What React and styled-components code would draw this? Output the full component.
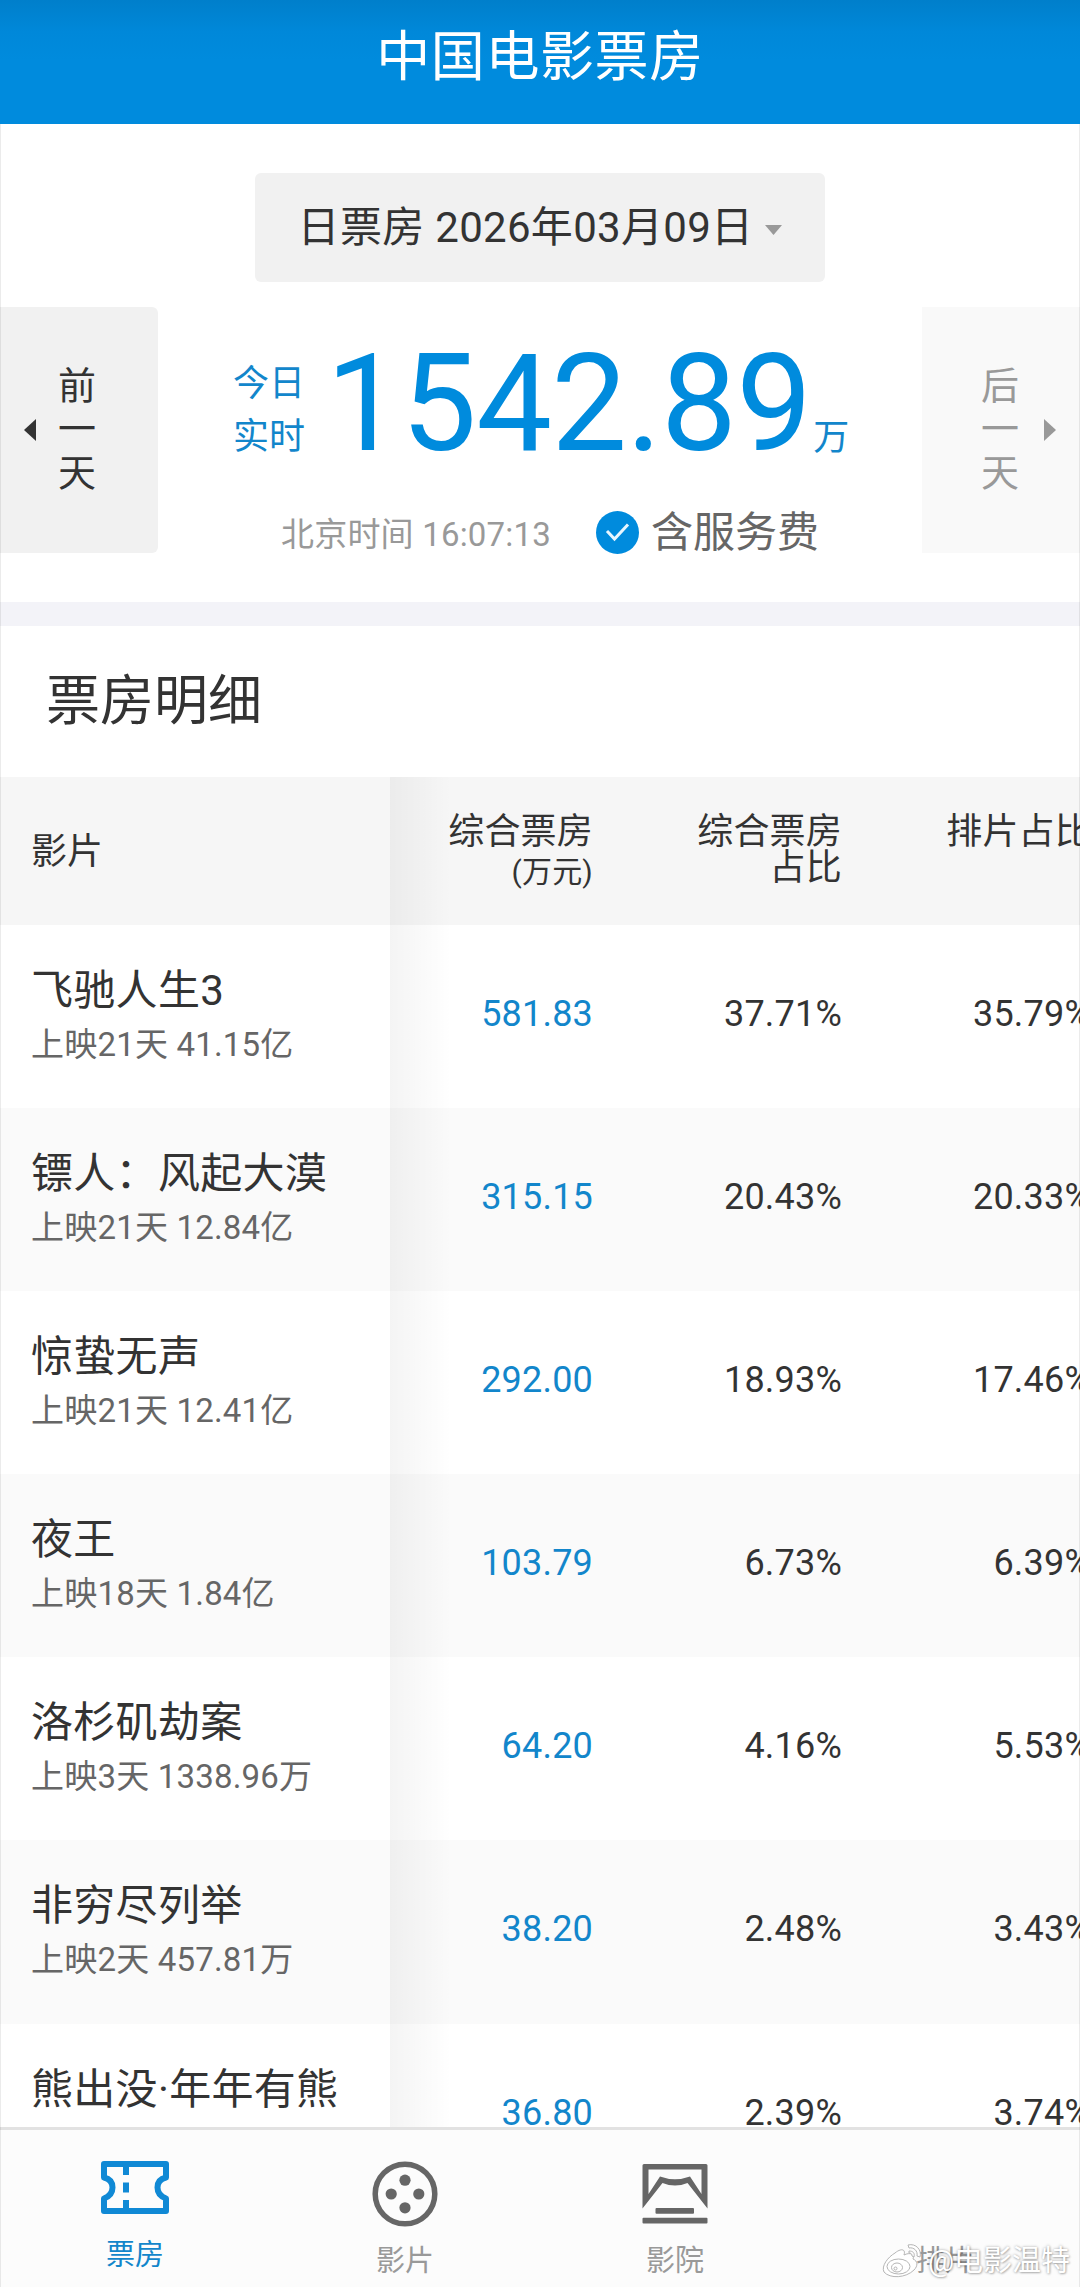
import styled, { createGlobalStyle } from "styled-components";
import { useState } from "react";

const BLUE = "#008bdd";
const TEXT_BLUE = "#1286cb";

const columns = [
  { title: "综合票房", unit: "(万元)" },
  { title: "综合票房", second: "占比" },
  { title: "排片占比" },
];

const movies = [
  { name: "飞驰人生3", info: "上映21天 41.15亿", box: "581.83", boxRate: "37.71%", showRate: "35.79%" },
  { name: "镖人：风起大漠", info: "上映21天 12.84亿", box: "315.15", boxRate: "20.43%", showRate: "20.33%" },
  { name: "惊蛰无声", info: "上映21天 12.41亿", box: "292.00", boxRate: "18.93%", showRate: "17.46%" },
  { name: "夜王", info: "上映18天 1.84亿", box: "103.79", boxRate: "6.73%", showRate: "6.39%" },
  { name: "洛杉矶劫案", info: "上映3天 1338.96万", box: "64.20", boxRate: "4.16%", showRate: "5.53%" },
  { name: "非穷尽列举", info: "上映2天 457.81万", box: "38.20", boxRate: "2.48%", showRate: "3.43%" },
  { name: "熊出没·年年有熊", info: "上映21天 9.86亿", box: "36.80", boxRate: "2.39%", showRate: "3.74%" },
];

export default function App() {
  return (
    <>
      <GlobalStyle />
      <Page>
        <Header>中国电影票房</Header>
        <Overview />
        <DetailTitle>票房明细</DetailTitle>
        <BoxOfficeTable />
        <BottomNav />
        <Watermark>
          <WeiboIcon />
          <span>@电影温特</span>
        </Watermark>
      </Page>
    </>
  );
}

// 日期 + 今日实时票房
const Overview = () => {
  const [withFee, setWithFee] = useState(true);

  return (
    <OverviewSection>
      <DateButton>
        日票房 2026年03月09日
        <Caret width="17" height="10" viewBox="0 0 17 10">
          <path d="M0 0h17L8.5 10z" fill="#999" />
        </Caret>
      </DateButton>
      <DayRow>
        <DayButton>
          <svg width="12" height="22" viewBox="0 0 12 22">
            <path d="M12 0v22L0 11z" fill="#333" />
          </svg>
          <DayText>前一天</DayText>
        </DayButton>
        <Summary>
          <Amount>
            <AmountLabel>今日实时</AmountLabel>
            <AmountNumber>1542.89</AmountNumber>
            <AmountUnit>万</AmountUnit>
          </Amount>
          <SummaryFoot>
            <ClockText>北京时间 16:07:13</ClockText>
            <FeeToggle onClick={() => setWithFee(!withFee)}>
              <svg width="43" height="43" viewBox="0 0 43 43">
                <circle cx="21.5" cy="21.5" r="21.5" fill={withFee ? BLUE : "#ccc"} />
                <path d="M11 20l7.500 8L32 13.500" fill="none" stroke="#e8f6ff" strokeWidth="3" />
              </svg>
              含服务费
            </FeeToggle>
          </SummaryFoot>
        </Summary>
        <DayButton $next>
          <DayText>后一天</DayText>
          <svg width="12" height="22" viewBox="0 0 12 22">
            <path d="M0 0v22l12-11z" fill="#999" />
          </svg>
        </DayButton>
      </DayRow>
    </OverviewSection>
  );
};

// 票房明细表
const BoxOfficeTable = () => (
  <TableWrapper>
    <HeadRow>
      <HeadName>影片</HeadName>
      {columns.map((col, i) => (
        <HeadCell key={i} $shadow={i === 0}>
          <p>{col.title}</p>
          {col.second && <p>{col.second}</p>}
          {col.unit && <HeadUnit>{col.unit}</HeadUnit>}
        </HeadCell>
      ))}
    </HeadRow>
    {movies.map((movie) => (
      <MovieRow key={movie.name}>
        <NameCell>
          <MovieName>{movie.name}</MovieName>
          <MovieInfo>{movie.info}</MovieInfo>
        </NameCell>
        <NumberCell $shadow $blue>
          {movie.box}
        </NumberCell>
        <NumberCell>{movie.boxRate}</NumberCell>
        <NumberCell>{movie.showRate}</NumberCell>
      </MovieRow>
    ))}
  </TableWrapper>
);

const BottomNav = () => (
  <Nav>
    <NavItem $active>
      <TicketIcon />
      <NavLabel $active>票房</NavLabel>
    </NavItem>
    <NavItem>
      <ReelIcon />
      <NavLabel>影片</NavLabel>
    </NavItem>
    <NavItem>
      <CinemaIcon />
      <NavLabel>影院</NavLabel>
    </NavItem>
    <NavItem>
      <EmptyIcon />
      <NavLabel>排片</NavLabel>
    </NavItem>
  </Nav>
);

const TicketIcon = () => (
  <svg width="68" height="53" viewBox="0 0 68 53" fill="none" stroke="#1089d5" strokeWidth="6">
    <path
      d="M3 3h62v13.500C58.500 18 56.500 22 56.500 26.500S58.500 35 65 37.500V50H3V37.500C9.500 35 11.500 31 11.500 26.500S9.500 18 3 16.500z"
      strokeLinejoin="round"
    />
    <path d="M25 3v11M25 21.500v10M25 39v11" />
  </svg>
);

const ReelIcon = () => (
  <svg width="66" height="66" viewBox="0 0 66 66">
    <circle cx="33" cy="33" r="29.800" fill="none" stroke="#666" strokeWidth="5.500" />
    <g fill="#666">
      <circle cx="33" cy="19.200" r="5.600" />
      <circle cx="19.200" cy="33" r="5.600" />
      <circle cx="46.800" cy="33" r="5.600" />
      <circle cx="33" cy="46.800" r="5.600" />
    </g>
  </svg>
);

const CinemaIcon = () => (
  <svg width="66" height="66" viewBox="0 0 66 66" fill="#666">
    <path
      fillRule="evenodd"
      d="M2 3h62q1.500 0 1.500 1.500v43L45.500 22q-12.500 5-25 0L.500 47.500v-43Q.500 3 2 3zM6.500 8.500V33L18 15.500q15 5.500 30 0L59.500 33V8.500z"
    />
    <rect x="13.500" y="47" width="38.500" height="5.700" rx="1" />
    <rect x="0.500" y="56.800" width="65" height="5.800" rx="1" />
  </svg>
);

const WeiboIcon = () => (
  <svg width="41" height="36" viewBox="0 0 41 36" fill="#fff" stroke="#b5b5b5" strokeWidth="1">
    <path d="M13 10C19 5 24 6 22 12c6-3 11-1 9 4 5 2 5 7 1 11-8 8-24 9-30 2C-1 23 6 14 13 10z" />
    <ellipse cx="16.500" cy="23.500" rx="11.500" ry="7.500" />
    <ellipse cx="15" cy="24.500" rx="5.500" ry="4.500" />
    <circle cx="13.500" cy="25.500" r="1.500" />
    <path d="M26 2c8-2 14 5 12 12l-3-1c1-5-3-9-8-8zM27 8c4 0 6 2 5 6l-2-1c0-2-1-3-3-3z" />
  </svg>
);

const GlobalStyle = createGlobalStyle`
  * {
    box-sizing: border-box;
    margin: 0;
    padding: 0;
  }

  body {
    background-color: #fff;
    color: #333;
    font-family: Roboto, "Noto Sans CJK SC", sans-serif;
  }

  button {
    border: none;
    font-family: inherit;
    color: inherit;
  }

  svg {
    display: block;
    flex: none;
  }
`;

const Page = styled.div`
  position: relative;
  width: 1080px;
  height: 2287px;
  display: flex;
  flex-direction: column;
  overflow: hidden;

  &::after {
    content: "";
    position: absolute;
    inset: 124px 0 0;
    border: solid rgba(0, 0, 0, 0.08);
    border-width: 0 1px;
    pointer-events: none;
  }
`;

const Header = styled.header`
  flex: none;
  height: 124px;
  background: linear-gradient(#007fcb, #0088d9 32px, ${BLUE} 60px);
  color: #fff;
  font-size: 54px;
  line-height: 116px;
  letter-spacing: 0.6px;
  text-align: center;
`;

const OverviewSection = styled.section`
  flex: none;
  padding: 49px 0;
  border-bottom: 24px solid #f3f3f8;
`;

const DateButton = styled.button`
  display: flex;
  align-items: center;
  justify-content: center;
  gap: 12px;
  width: 570px;
  height: 109px;
  margin: 0 auto 25px;
  border-radius: 6px;
  background-color: #f1f1f1;
  font-size: 42px;
  line-height: 60px;
  letter-spacing: 0.3px;
`;

const Caret = styled.svg`
  margin-top: 4px;
`;

const DayRow = styled.div`
  display: flex;
  height: 246px;
`;

const DayButton = styled.button`
  display: flex;
  align-items: center;
  justify-content: ${(props) => (props.$next ? "flex-end" : "flex-start")};
  gap: ${(props) => (props.$next ? "25px" : "22px")};
  width: 158px;
  padding: 0 24px;
  border-radius: ${(props) => (props.$next ? "0" : "0 6px 6px 0")};
  background-color: ${(props) => (props.$next ? "#f9f9f9" : "#f1f1f1")};
  color: ${(props) => (props.$next ? "#999" : "#333")};
`;

const DayText = styled.span`
  width: 38px;
  font-size: 38px;
  line-height: 43.5px;
  word-break: break-all;
`;

const Summary = styled.div`
  flex: 1;
  padding-top: 51px;
`;

const Amount = styled.div`
  display: flex;
  height: 106px;
  padding-left: 75px;
  color: ${TEXT_BLUE};
`;

const AmountLabel = styled.div`
  width: 72px;
  font-size: 36px;
  line-height: 53px;
`;

const AmountNumber = styled.strong`
  margin-left: 21px;
  color: ${BLUE};
  font-size: 135px;
  font-weight: 400;
  line-height: 92px;
  letter-spacing: -0.8px;
`;

const AmountUnit = styled.span`
  align-self: flex-end;
  margin-left: 2px;
  font-size: 36px;
  line-height: 51px;
`;

const SummaryFoot = styled.div`
  display: flex;
  align-items: center;
  justify-content: space-between;
  height: 43px;
  margin-top: 47px;
  padding: 0 103px 0 123px;
`;

const ClockText = styled.span`
  color: #999;
  font-size: 33px;
  line-height: 43px;
  letter-spacing: 0.2px;
  padding-top: 4px;
`;

const FeeToggle = styled.div`
  display: flex;
  align-items: center;
  gap: 12px;
  color: #666;
  font-size: 42px;
  line-height: 43px;
`;

const DetailTitle = styled.h2`
  flex: none;
  height: 151px;
  padding-left: 46px;
  font-size: 54px;
  font-weight: 400;
  line-height: 151px;
`;

const TableWrapper = styled.div`
  flex: 1;
  min-height: 0;
  overflow: hidden;
`;

const Row = styled.div`
  display: grid;
  grid-template-columns: 390px 203px 249px 249px;
  grid-template-rows: 100%;
  width: 1091px;
`;

const HeadRow = styled(Row)`
  height: 148px;
  background-color: #f6f6f6;
`;

const MovieRow = styled(Row)`
  height: 183.1px;

  &:nth-child(odd) {
    background-color: #fafafa;
  }
`;

const HeadName = styled.div`
  padding: 2px 0 0 31px;
  font-size: 36px;
  line-height: 146px;
`;

// 固定列右侧的阴影落在第一个数据列上
const DataCell = styled.div`
  text-align: right;
  font-size: 36px;
  letter-spacing: 0.2px;
  background-image: ${(props) =>
    props.$shadow ? "linear-gradient(90deg, rgba(0, 0, 0, 0.045), rgba(0, 0, 0, 0) 62px)" : "none"};
`;

const HeadCell = styled(DataCell)`
  padding-top: 37px;
  line-height: 36px;
`;

const HeadUnit = styled.p`
  font-size: 30px;
  line-height: 44px;
`;

const NameCell = styled.div`
  padding: 39px 0 0 31px;
  white-space: nowrap;
`;

const MovieName = styled.p`
  font-size: 42px;
  line-height: 54px;
  letter-spacing: 0.3px;
`;

const MovieInfo = styled.p`
  color: #666;
  font-size: 33px;
  line-height: 54px;
  letter-spacing: 0.2px;
`;

const NumberCell = styled(DataCell)`
  padding-top: 62px;
  line-height: 54px;
  color: ${(props) => (props.$blue ? TEXT_BLUE : "#333")};
`;

const Nav = styled.nav`
  flex: none;
  display: grid;
  grid-template-columns: repeat(4, 1fr);
  height: 160px;
  border-top: 3px solid #e2e2e2;
  background-color: #fcfcfc;
`;

const NavItem = styled.div`
  display: flex;
  flex-direction: column;
  align-items: center;
  gap: ${(props) => (props.$active ? "21px" : "14px")};
  padding-top: 31px;
`;

const NavLabel = styled.span`
  color: ${(props) => (props.$active ? TEXT_BLUE : "#999")};
  font-size: 29px;
  line-height: 40px;
`;

const EmptyIcon = styled.div`
  height: 66px;
`;

const Watermark = styled.div`
  position: absolute;
  right: 10px;
  bottom: 8px;
  display: flex;
  align-items: center;
  gap: 5px;
  color: #fff;
  font-size: 29px;
  line-height: 36px;
  text-shadow: 0 0 3px rgba(0, 0, 0, 0.35), 1px 1px 2px rgba(0, 0, 0, 0.2);
`;
